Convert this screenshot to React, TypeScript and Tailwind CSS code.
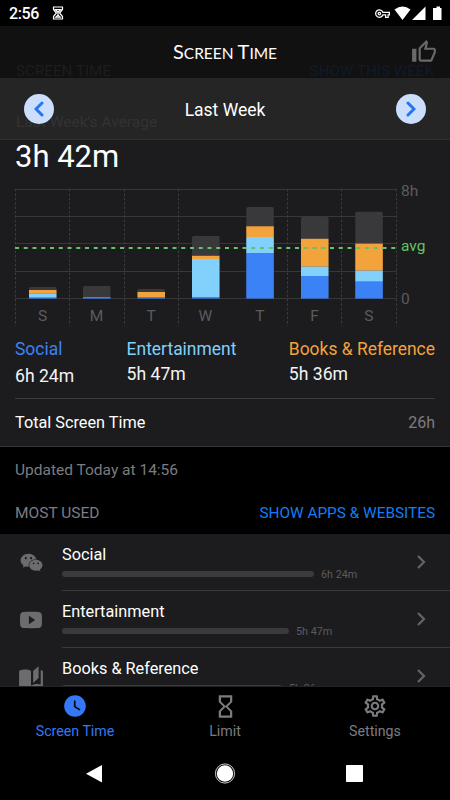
import React from "react";
import { MdOutlineThumbUp, MdOutlineVpnKey, MdHourglassEmpty, MdOutlineSettings, MdWatchLater } from "react-icons/md";
import { AiFillWechat } from "react-icons/ai";
import { IoLogoYoutube } from "react-icons/io5";

const BLUE = "#3b82f7";
const SKY = "#82d0fc";
const ORANGE = "#f2a33c";
const GREY = "#39393b";

// Each bar: left edge, then the top of the grey, orange, sky and blue parts.
const bars = [
  { day: "S", x: 29, tops: [107, 110, 113.3, 117.7] },
  { day: "M", x: 83, tops: [106, 117, 117, 117] },
  { day: "T", x: 137.5, tops: [109, 112, 117, 117] },
  { day: "W", x: 192, tops: [56, 75.8, 79, 117.5] },
  { day: "T", x: 246.3, tops: [27, 46.3, 57, 73] },
  { day: "F", x: 301, tops: [37, 58.8, 86.7, 96] },
  { day: "S", x: 355.3, tops: [31.7, 63.6, 90.7, 101.7] },
];
const fills = [GREY, ORANGE, SKY, BLUE];
const BASE = 118.6;

function Chart() {
  return (
    <svg width="450" height="150" viewBox="0 0 450 150" className="block shrink-0">
      {[9.5, 36.5, 63.5, 91.5, 118.5].map((y) => (
        <line key={y} x1="15" x2="397" y1={y} y2={y} stroke="#37373a" />
      ))}
      {[15.5, 69.5, 124.5, 178.5, 287.5, 341.5, 396.5].map((x) => (
        <line key={x} x1={x} x2={x} y1="9" y2="146" stroke="#3d3d40" strokeDasharray="2.4 2" />
      ))}
      {bars.map((b, i) => (
        <g key={i}>
          <rect x={b.x} y={b.tops[0]} width="27.5" height={BASE - b.tops[0]} rx="1.5" fill={GREY} />
          {b.tops.slice(1).map((top, k) => {
            const end = k < 2 ? b.tops[k + 2] : BASE;
            return <rect key={k} x={b.x} y={top} width="27.5" height={end - top} fill={fills[k + 1]} />;
          })}
          <text x={b.x + 13.5} y="141" textAnchor="middle" fontSize="15.5" fill="#5b5b5e">{b.day}</text>
        </g>
      ))}
      <line x1="15" x2="396" y1="68" y2="68" stroke="#62c466" strokeWidth="1.8" strokeDasharray="4 4.75" />
      <text x="401" y="15.5" fontSize="15.5" fill="#5b5b5e">8h</text>
      <text x="401" y="71" fontSize="15.5" fill="#62c466">avg</text>
      <text x="401" y="124" fontSize="15.5" fill="#5b5b5e">0</text>
    </svg>
  );
}

function Chevron({ className, left = false }: { className: string; left?: boolean }) {
  return (
    <svg width="10" height="16" viewBox="0 0 10 16" className={className} fill="none" stroke="currentColor">
      <path d={left ? "M8 2 2 8l6 6" : "M2 2l6 6-6 6"} />
    </svg>
  );
}

function WeekButton({ left = false }: { left?: boolean }) {
  return (
    <button className="flex size-[30px] items-center justify-center rounded-full bg-[#cbdffc] text-[#2574f5]">
      <Chevron left={left} className="stroke-[3] [stroke-linecap:round]" />
    </button>
  );
}

function Stat({ name, time, color, low = false }: { name: string; time: string; color: string; low?: boolean }) {
  return (
    <div className={color}>
      <div className="text-[17.45px] leading-[26px]">{name}</div>
      <div className={`text-[17.6px] leading-[25px] text-[#f4f4f4] ${low ? "pt-0.5" : ""}`}>{time}</div>
    </div>
  );
}

function Row({ name, time, bar, icon }: { name: string; time: string; bar: string; icon: React.ReactNode }) {
  return (
    <div className="flex h-[57px] shrink-0">
      <div className="flex w-[62px] items-center justify-center text-[#6c6c6e]">{icon}</div>
      <div className="flex flex-1 items-center border-b border-[#3a3a3d]">
        <div className="flex-1">
          <div className="pt-px text-[16.3px] leading-[22px] text-white">{name}</div>
          <div className="flex h-4 items-center gap-[7px]">
            <div className={`h-1.5 rounded-full bg-[#3a3a3c] ${bar}`} />
            <div className="pt-[2px] text-[10.8px] leading-4 text-[#5b5b5e]">{time}</div>
          </div>
        </div>
        <Chevron className="mr-[24px] text-[#646466] stroke-[2.2]" />
      </div>
    </div>
  );
}

function Tab({ label, color, children }: { label: string; color: string; children: React.ReactNode }) {
  return (
    <div className={`flex flex-1 flex-col items-center pt-[6px] ${color}`}>
      <div className="flex h-[26px] items-center">{children}</div>
      <div className="pt-px text-[14.2px] leading-[23px]">{label}</div>
    </div>
  );
}

export default function App() {
  return (
    <div className="flex h-[800px] w-[450px] flex-col overflow-hidden bg-black font-[Roboto,sans-serif] text-white">
      <div className="flex h-[26px] shrink-0 items-center pl-[9px] pr-[7px]">
        <span className="w-[30px] whitespace-nowrap pt-[2px] text-[16px] font-medium leading-5 tracking-[-0.4px]">2:56</span>
        <svg width="12" height="14" viewBox="0 0 12 14" className="ml-[13px]" fill="none" stroke="white" strokeWidth="1.2">
          <path d="M1.5 1h9v2.500L7.600 7l2.900 3.500V13h-9v-2.500L4.400 7 1.500 3.500zM3.500 3.600h5L6 6.500zM6 6v4M3.800 11.200 6 9l2.200 2.200z" />
        </svg>
        <div className="ml-auto flex items-center">
          <MdOutlineVpnKey size={15} />
          <svg width="49" height="15" viewBox="0 0 49 15" className="ml-[4px]" fill="white">
            <path d="M.5 3.5Q8.5-2.5 16.5 3.5L8.5 14zM31.5.5V14H18zM41 2h1.500V.5h3.500V2H47.500V14H39V2z" />
          </svg>
        </div>
      </div>

      <header className="relative flex h-[52px] shrink-0 items-center justify-center bg-[#111112]">
        <span className="absolute left-4 top-[34px] text-[15.2px] leading-[22px] text-[#1d1d1e]">SCREEN TIME</span>
        <span className="absolute right-4 top-[34px] text-[15.2px] leading-[22px] text-[#101b28]">SHOW THIS WEEK</span>
        <h1 className="relative font-[Lato,sans-serif] text-[15.5px] leading-6">
          <span className="text-[20px]">S</span>CREEN <span className="text-[20px]">T</span>IME
        </h1>
        <MdOutlineThumbUp size={26} className="absolute right-[13px] top-[13px] text-[#69696b]" />
      </header>

      <div className="relative flex h-[62px] shrink-0 items-center justify-between border-b border-[#303032] bg-[#252525] px-6 pt-px">
        <span className="absolute left-4 top-[33px] text-[15.5px] leading-[22px] text-[#333334]">Last Week&apos;s Average</span>
        <div className="relative"><WeekButton left /></div>
        <div className="relative pt-[2px] text-[17.5px]">Last Week</div>
        <WeekButton />
      </div>

      <main className="flex h-[307px] shrink-0 flex-col border-b border-[#353538] bg-[#1c1c1e]">
        <div className="h-10 shrink-0 px-[15px] text-[31px] leading-[33px]">3h 42m</div>
        <Chart />
        <div className="mx-[15px] flex h-[69px] shrink-0 justify-between border-b border-[#3c3c3f] pt-[6px]">
          <Stat name="Social" time="6h 24m" color="text-[#3b82f7]" low />
          <Stat name="Entertainment" time="5h 47m" color="text-[#82d0fc]" />
          <Stat name="Books & Reference" time="5h 36m" color="text-[#f2a33c]" />
        </div>
        <div className="flex flex-1 items-center justify-between px-[15px]">
          <span className="pt-[2px] text-[16.25px]">Total Screen Time</span>
          <span className="text-[16px] text-[#7c7c80]">26h</span>
        </div>
      </main>

      <div className="flex h-[87px] shrink-0 flex-col justify-between px-[15px] pb-[9px] pt-[11px] text-[15.5px] leading-6 text-[#7c7c80]">
        <div>Updated Today at 14:56</div>
        <div className="flex justify-between">
          <span>MOST USED</span>
          <span className="text-[15.35px] text-[#0f7ef5]">SHOW APPS &amp; WEBSITES</span>
        </div>
      </div>

      <section className="flex h-[152px] shrink-0 flex-col overflow-hidden bg-[#1c1c1e]">
        <Row name="Social" time="6h 24m" bar="w-[252px]" icon={<AiFillWechat size={25} />} />
        <Row name="Entertainment" time="5h 47m" bar="w-[227px]" icon={<IoLogoYoutube size={22} />} />
        <Row
          name="Books & Reference"
          time="5h 36m"
          bar="w-[220px]"
          icon={
            <svg width="26" height="26" viewBox="0 0 24 24" fill="currentColor">
              <path d="M19 2L14 6.500V17.500L19 13V2M6.500 5C4.550 5 2.450 5.400 1 6.500V21.160C1 21.410 1.250 21.660 1.500 21.660C1.600 21.660 1.650 21.590 1.750 21.590C3.100 20.940 5.050 20.500 6.500 20.500C8.450 20.500 10.550 20.900 12 22C13.350 21.150 15.800 20.500 17.500 20.500C19.150 20.500 20.850 20.810 22.250 21.560C22.350 21.610 22.400 21.590 22.500 21.590C22.750 21.590 23 21.340 23 21.090V6.500C22.400 6.050 21.750 5.750 21 5.500V19C19.900 18.650 18.700 18.500 17.500 18.500C15.800 18.500 13.350 19.150 12 20V6.500C10.550 5.400 8.450 5 6.500 5Z" />
            </svg>
          }
        />
      </section>

      <nav className="flex h-[62px] shrink-0 border-t border-[#242426]">
        <Tab label="Screen Time" color="text-[#3478f6]"><MdWatchLater size={26} /></Tab>
        <Tab label="Limit" color="text-[#7c7c80]"><MdHourglassEmpty size={27} /></Tab>
        <Tab label="Settings" color="text-[#7c7c80]"><MdOutlineSettings size={26} /></Tab>
      </nav>

      <div className="flex h-[52px] shrink-0 items-center px-[85px]">
        <svg width="280" height="22" viewBox="0 0 280 22" fill="white">
          <path d="M17 2v17.500L1 10.800z" />
          <circle cx="140" cy="10.500" r="8.200" />
          <circle cx="140" cy="10.500" r="9.600" fill="none" stroke="white" strokeWidth=".8" />
          <rect x="261" y="2" width="17" height="17" rx=".8" />
        </svg>
      </div>
    </div>
  );
}
